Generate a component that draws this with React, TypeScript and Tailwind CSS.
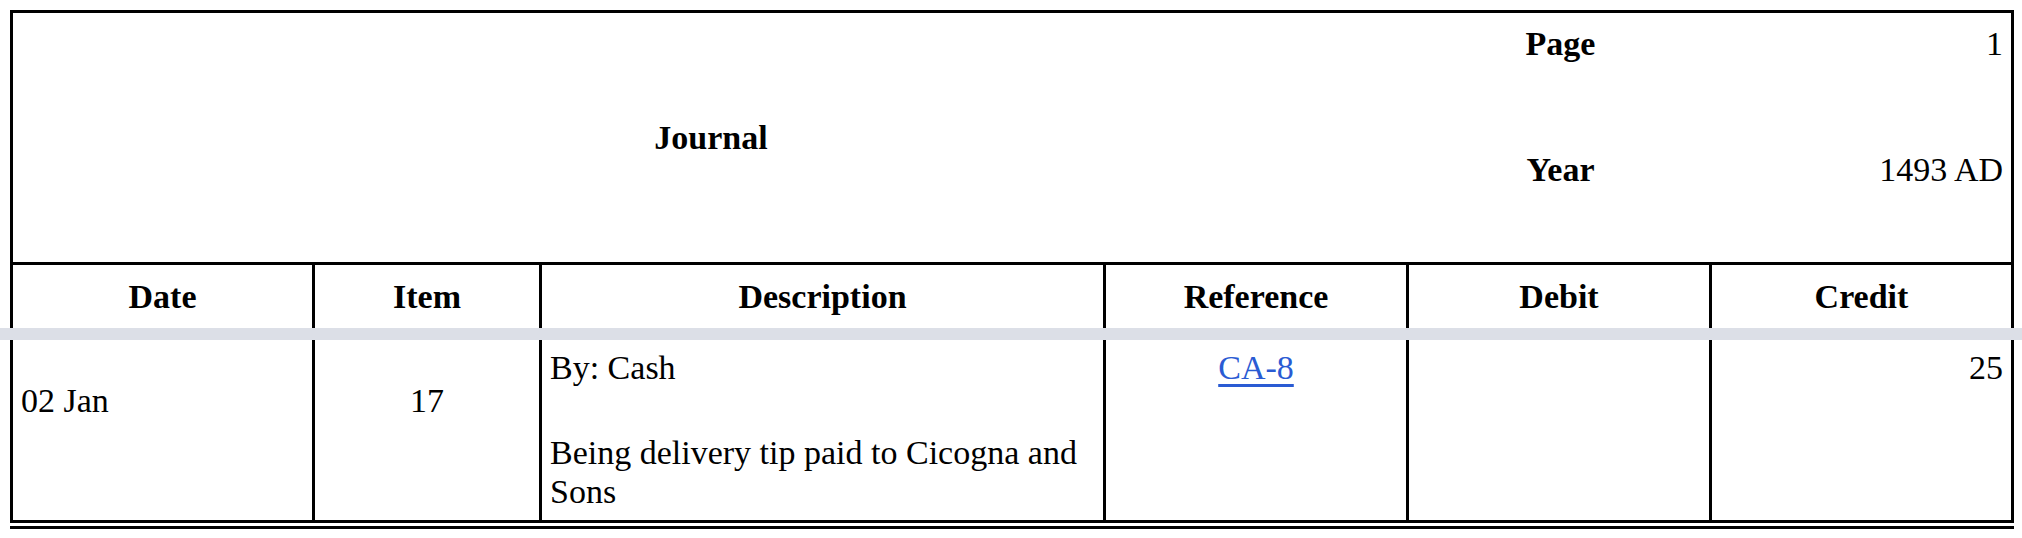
const cols = 'grid grid-cols-[302px_227px_564px_303px_303px_299px]';

function JournalHeader() {
  return (
    <div className="ml-[10px] w-[2004px] border-x-[3px] border-t-[3px] border-black">
      <div className={`${cols} grid-rows-[126px_123px] border-b-[3px] border-black`}>
        <div className="col-span-4 row-span-2 flex items-center justify-center font-bold">Journal</div>
        <div className="px-2 pt-[11px] text-center font-bold">Page</div>
        <div className="px-2 pt-[11px] text-right">1</div>
        <div className="px-2 pt-[11px] text-center font-bold">Year</div>
        <div className="px-2 pt-[11px] text-right">1493 AD</div>
      </div>
      <div className={`${cols} h-[63px] font-bold`}>
        <div className="border-r-[3px] border-black px-2 pt-[12px] text-center">Date</div>
        <div className="border-r-[3px] border-black px-2 pt-[12px] text-center">Item</div>
        <div className="border-r-[3px] border-black px-2 pt-[12px] text-center">Description</div>
        <div className="border-r-[3px] border-black px-2 pt-[12px] text-center">Reference</div>
        <div className="border-r-[3px] border-black px-2 pt-[12px] text-center">Debit</div>
        <div className="px-2 pt-[12px] text-center">Credit</div>
      </div>
    </div>
  );
}

function JournalRow() {
  return (
    <div className="ml-[10px] w-[2004px] border-x-[3px] border-b-[3px] border-black">
      <div className={`${cols} h-[180px]`}>
        <div className="border-r-[3px] border-black px-2 pt-[41px]">02 Jan</div>
        <div className="border-r-[3px] border-black px-2 pt-[41px] text-center">17</div>
        <div className="border-r-[3px] border-black px-2 pt-[8px]">
          <p>By: Cash</p>
          <p className="mt-[46px]">Being delivery tip paid to Cicogna and Sons</p>
        </div>
        <div className="border-r-[3px] border-black px-2 pt-[8px] text-center">
          <a href="#" className="text-[#2a5bd3] underline decoration-[3px] underline-offset-[5px]">
            CA-8
          </a>
        </div>
        <div className="border-r-[3px] border-black px-2 pt-[8px]"></div>
        <div className="px-2 pt-[8px] text-right">25</div>
      </div>
    </div>
  );
}

export default function App() {
  return (
    <div className="min-h-screen bg-white pt-[10px] font-['Liberation_Serif',serif] text-[34px] leading-[39px] text-black">
      <JournalHeader />
      <div className="h-[12px] w-full bg-[#dcdfe7]" />
      <JournalRow />
      <div className="ml-[10px] mt-[3px] h-[3px] w-[2004px] bg-black" />
    </div>
  );
}
